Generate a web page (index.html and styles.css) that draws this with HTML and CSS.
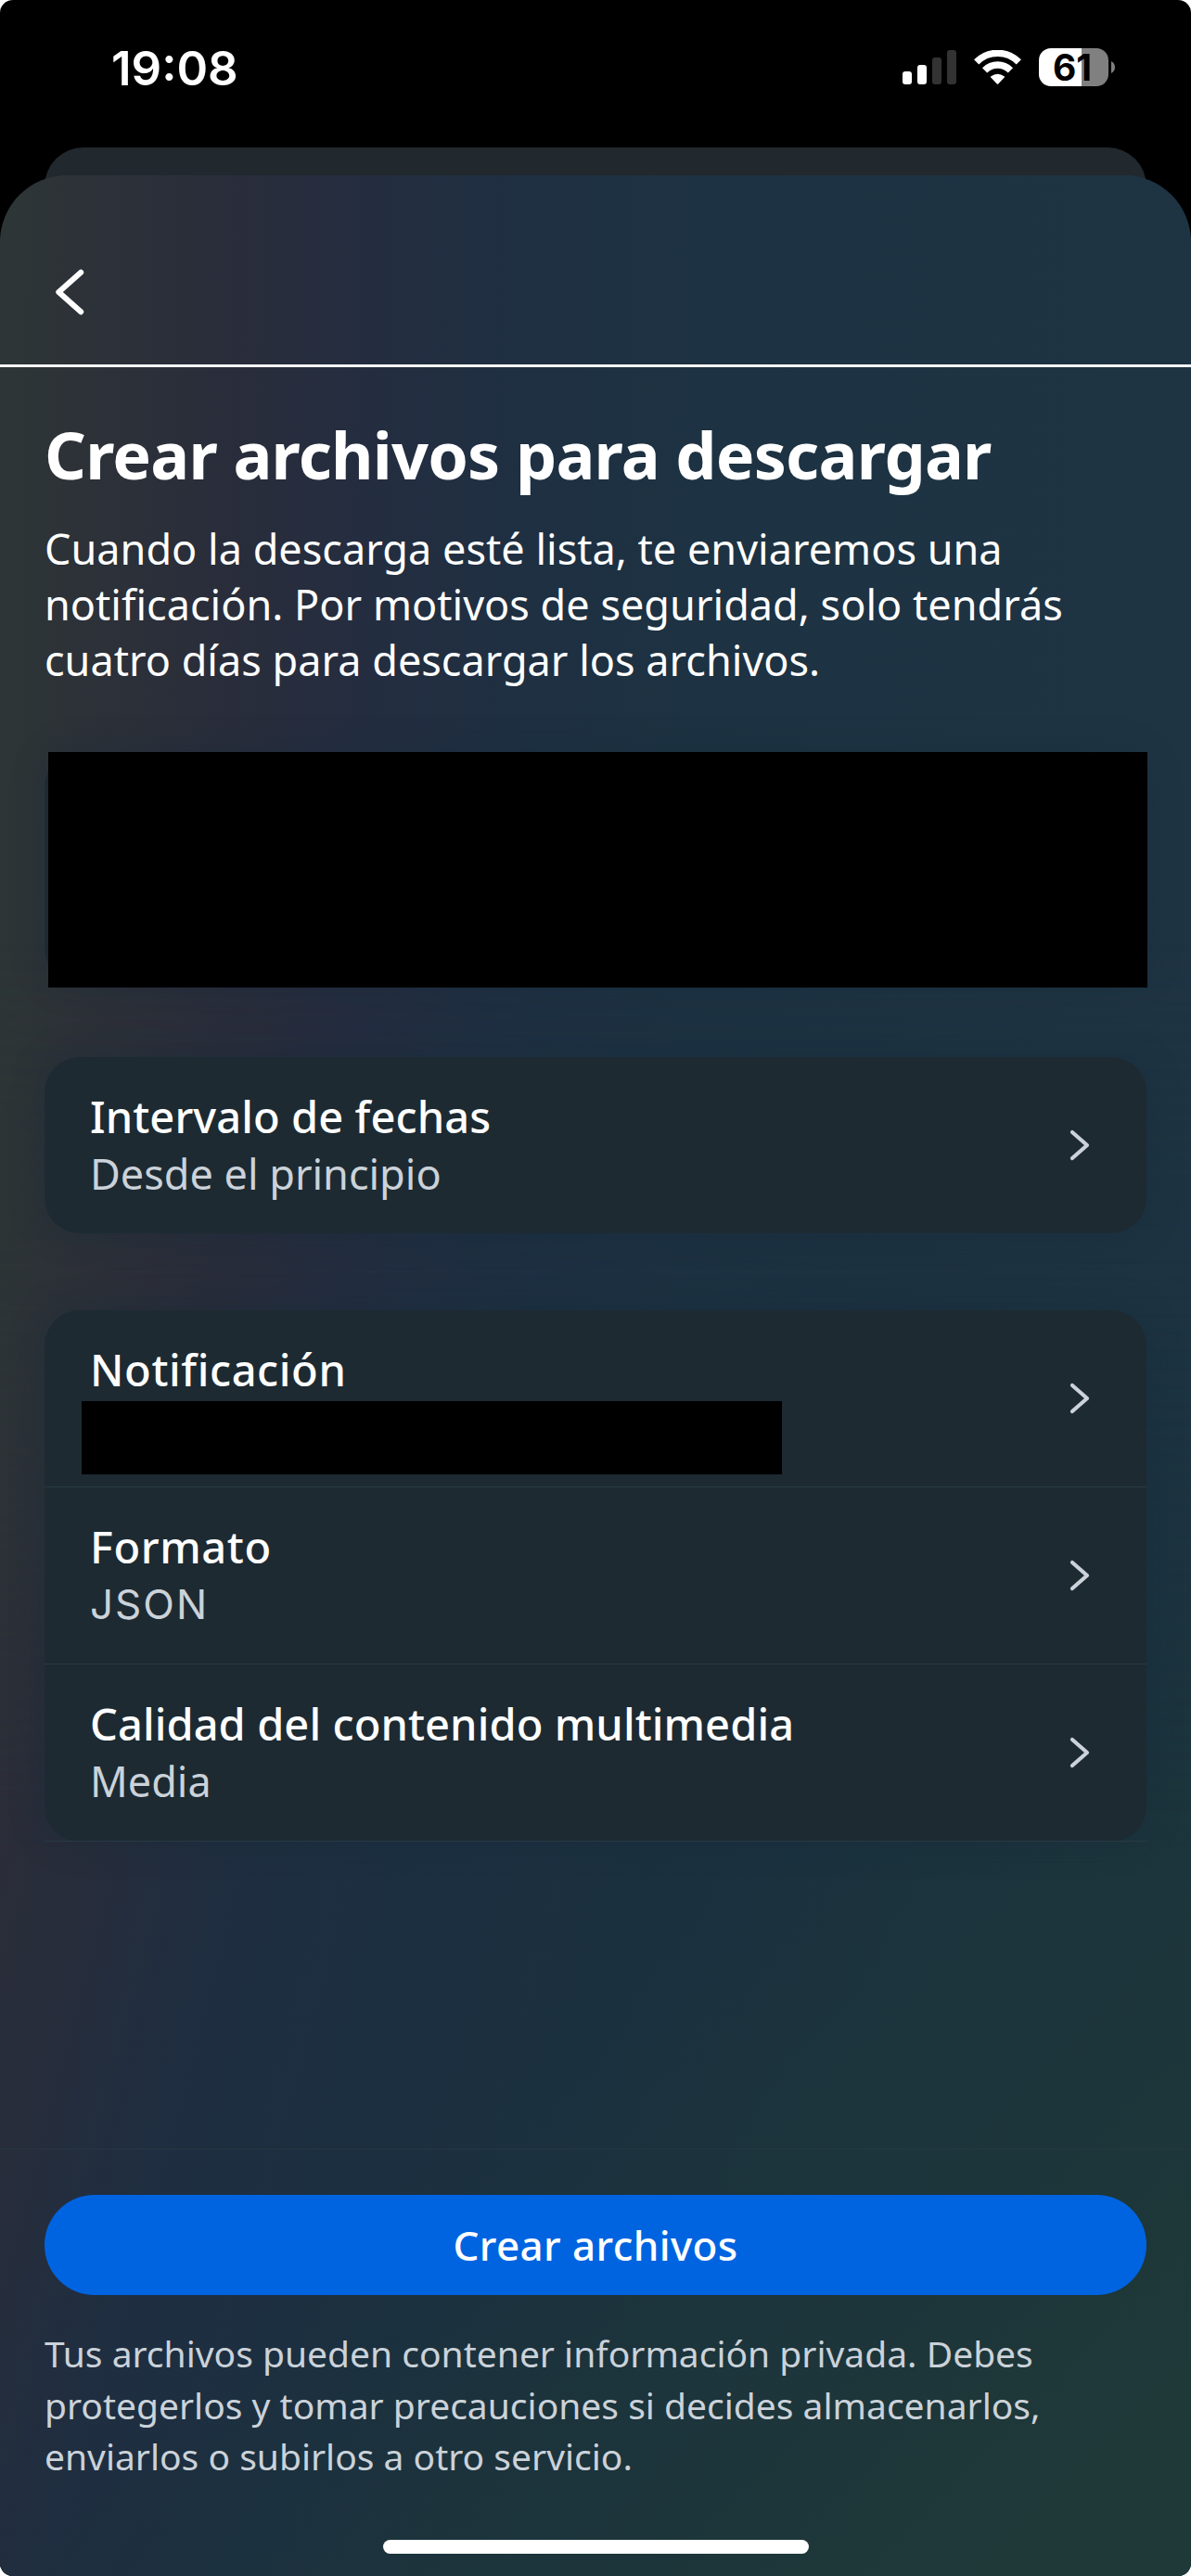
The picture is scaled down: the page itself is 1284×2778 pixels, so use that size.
FILE: index.html
```html
<!DOCTYPE html>
<html lang="es">
<head>
<meta charset="utf-8">
<title>Crear archivos para descargar</title>
<link rel="stylesheet" href="styles.css">
</head>
<body>
<div class="screen">
  <header class="status-bar">
    <time class="clock">19:08</time>
    <div class="indicators">
      <svg class="signal" width="58" height="37" viewBox="0 0 58 37" aria-hidden="true">
        <rect x="0" y="23" width="10" height="14" rx="3" fill="#fff"/>
        <rect x="16" y="16" width="10" height="21" rx="3" fill="#fff"/>
        <rect x="32" y="8" width="10" height="29" rx="3" fill="#333"/>
        <rect x="48" y="0" width="10" height="37" rx="3" fill="#333"/>
      </svg>
      <svg class="wifi" width="51" height="37" viewBox="0 0 51 37" aria-hidden="true">
        <g fill="none" stroke="#fff" stroke-width="7.4">
          <path d="M2.7 12.9A32 32 0 0 1 48.3 12.9"/>
          <path d="M11.6 21.8A19.6 19.6 0 0 1 39.4 21.8"/>
        </g>
        <path d="M18.2 29.6Q17.6 28.9 18.4 28.3Q25.5 23 32.6 28.3Q33.4 28.9 32.8 29.6L26.2 36.4Q25.5 37 24.8 36.4Z" fill="#fff"/>
      </svg>
      <div class="battery"><span class="battery-level">61</span></div>
      <svg class="battery-cap" width="4" height="13" viewBox="0 0 4 13" aria-hidden="true"><path d="M0 0Q4 2.2 4 6.5T0 13Z" fill="#808080"/></svg>
    </div>
  </header>

  <div class="sheet-behind"></div>

  <main class="sheet">
    <nav class="nav">
      <svg width="34" height="52" viewBox="0 0 34 52" aria-label="Atrás"><path d="M29.2 4.8L5.3 26L29.2 47.2" fill="none" stroke="#fff" stroke-width="6" stroke-linecap="round" stroke-linejoin="round"/></svg>
    </nav>

    <section class="content">
      <h1 class="title">Crear archivos para descargar</h1>
      <p class="intro">Cuando la descarga esté lista, te enviaremos una<br>notificación. Por motivos de seguridad, solo tendrás<br>cuatro días para descargar los archivos.</p>

      <div class="card account"><div class="redacted-account"></div></div>

      <div class="card">
        <div class="row">
          <div class="row-text">
            <div class="label">Intervalo de fechas</div>
            <div class="value">Desde el principio</div>
          </div>
          <svg class="chevron" width="24" height="36" viewBox="0 0 24 36" aria-hidden="true"><path d="M4 4L20 18L4 32"/></svg>
        </div>
      </div>

      <div class="card options">
        <div class="row">
          <div class="row-text">
            <div class="label label-wide">Notificación</div>
            <div class="redacted-value"></div>
          </div>
          <svg class="chevron" width="24" height="36" viewBox="0 0 24 36" aria-hidden="true"><path d="M4 4L20 18L4 32"/></svg>
        </div>
        <div class="row">
          <div class="row-text">
            <div class="label label-wide">Formato</div>
            <div class="value value-caps">JSON</div>
          </div>
          <svg class="chevron" width="24" height="36" viewBox="0 0 24 36" aria-hidden="true"><path d="M4 4L20 18L4 32"/></svg>
        </div>
        <div class="row">
          <div class="row-text">
            <div class="label">Calidad del contenido multimedia</div>
            <div class="value">Media</div>
          </div>
          <svg class="chevron" width="24" height="36" viewBox="0 0 24 36" aria-hidden="true"><path d="M4 4L20 18L4 32"/></svg>
        </div>
      </div>
    </section>

    <footer class="footer">
      <button class="primary" type="button">Crear archivos</button>
      <p class="note">Tus archivos pueden contener información privada. Debes<br>protegerlos y tomar precauciones si decides almacenarlos,<br>enviarlos o subirlos a otro servicio.</p>
      <div class="home-indicator"></div>
    </footer>
  </main>
</div>
</body>
</html>
```
FILE: styles.css
```css
* {
  box-sizing: border-box;
}

body {
  margin: 0;
  background: #fff;
  color: #fff;
  font-family: "Noto Sans", "Open Sans", sans-serif;
}

h1,
p {
  margin: 0;
}

svg {
  display: block;
  flex: none;
}

.screen {
  display: flex;
  flex-direction: column;
  width: 1284px;
  height: 2778px;
  overflow: hidden;
  border-radius: 14px;
  background: #000;
}

/* Status bar */
.status-bar {
  display: flex;
  justify-content: space-between;
  align-items: flex-start;
  flex: none;
  height: 159px;
  padding: 52px 82px 0 120px;
}

.clock {
  font: 600 51px/43px Inter, sans-serif;
}

.indicators {
  display: flex;
  align-items: center;
  height: 41px;
}

.wifi {
  margin-left: 19px;
}

.battery {
  display: flex;
  justify-content: center;
  width: 75px;
  height: 41px;
  margin-left: 19px;
  padding-right: 3px;
  border-radius: 13px;
  background: linear-gradient(90deg, #fff 46px, #808080 46px);
}

.battery-level {
  color: #000;
  font: 700 39px/41px Inter, sans-serif;
}

.battery-cap {
  margin-left: 3px;
}

/* Stacked sheets */
.sheet-behind {
  flex: none;
  height: 70px;
  margin: 0 48px -40px;
  border-radius: 42px 42px 0 0;
  background: #21282e;
}

.sheet {
  position: relative;
  z-index: 0;
  display: flex;
  flex-direction: column;
  flex: 1;
  overflow: hidden;
  border-radius: 72px 72px 0 0;
  background: linear-gradient(90.8deg, #2d3636 0, #2d3138 100px, #292d3b 260px, #242d40 400px, #1e3042 580px, #1d3242 760px, #1f3443 100%);
}

/* Lower half of the backdrop drifts from navy to green in the corner */
.sheet::before {
  content: "";
  position: absolute;
  inset: 0;
  z-index: -1;
  background:
    linear-gradient(135deg, rgba(31, 56, 56, 0) 67%, rgba(29, 54, 57, 0.7) 82%, #1f3838 94%),
    linear-gradient(105deg, #2d3536 12%, #2c3038 20%, #2a2d39 25%, #262d3c 30.5%, #1f2e40 37%, #1c2f41 46%, #1b303f 60%, #1b323f 75%);
  -webkit-mask-image: linear-gradient(transparent 32%, #000 70%);
  mask-image: linear-gradient(transparent 32%, #000 70%);
}

.nav {
  display: flex;
  align-items: flex-start;
  flex: none;
  height: 207px;
  padding: 100px 0 0 58px;
  border-bottom: 3px solid #fff;
}

.content {
  flex: 1;
  padding: 52px 48px 0;
}

.title {
  font-size: 70px;
  line-height: 84px;
  font-weight: 700;
  letter-spacing: -0.77px;
  white-space: nowrap;
}

.intro {
  margin-top: 30px;
  font-size: 45px;
  line-height: 60px;
  letter-spacing: 0.02px;
  white-space: nowrap;
}

/* Cards */
.card {
  margin-top: 80px;
  border-radius: 38px;
  background: #1d2a32;
  box-shadow: 0 0 36px rgba(20, 42, 58, 0.4);
}

.account {
  height: 249px;
  margin-top: 69px;
}

.redacted-account {
  height: 254px;
  margin: 0 -1px 0 4px;
  background: #000;
}

.options {
  margin-top: 83px;
}

.row {
  display: flex;
  justify-content: space-between;
  height: 190px;
  padding: 34px 60px 0 49px;
}

.options .row {
  height: 191px;
  border-bottom: 1px solid #283a43;
}

.label {
  font-size: 47px;
  line-height: 61px;
  font-weight: 500;
  letter-spacing: 0.08px;
  white-space: nowrap;
}

.label-wide {
  letter-spacing: 0.6px;
}

.value {
  margin-top: 1px;
  color: #cbd2d9;
  font-size: 45px;
  line-height: 60px;
}

.value-caps {
  font-family: Inter, sans-serif;
  font-size: 44px;
  letter-spacing: 2px;
}

.redacted-value {
  width: 755px;
  height: 79px;
  margin: 3px 0 0 -9px;
  background: #000;
}

.chevron {
  margin-top: 43px;
  fill: none;
  stroke: #cbd2d9;
  stroke-width: 4.2;
  stroke-linecap: round;
  stroke-linejoin: round;
}

/* Footer */
.footer {
  display: flex;
  flex-direction: column;
  flex: none;
  height: 461px;
  padding: 49px 48px 0;
  border-top: 1px solid #263740;
}

.primary {
  flex: none;
  height: 108px;
  padding: 0;
  border: 0;
  border-radius: 54px;
  background: #0064e0;
  color: #fff;
  font: 500 44px/106px "Noto Sans", sans-serif;
  letter-spacing: 0.4px;
}

.note {
  margin-top: 35px;
  color: #cbd2d9;
  font-size: 39px;
  line-height: 55.7px;
  letter-spacing: 0;
  white-space: nowrap;
}

.home-indicator {
  flex: none;
  align-self: center;
  width: 459px;
  height: 15px;
  margin-top: 62px;
  border-radius: 8px;
  background: #fff;
}
```
